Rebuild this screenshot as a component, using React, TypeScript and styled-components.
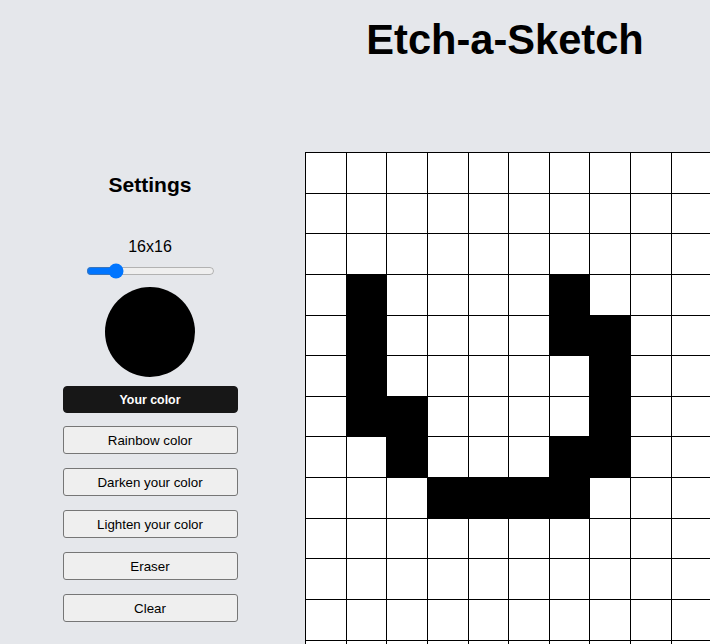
import React, { useState } from "react";
import styled, { createGlobalStyle } from "styled-components";

const Global = createGlobalStyle`
  html, body {
    margin: 0;
    padding: 0;
    background: #e5e7eb;
    overflow: hidden;
    font-family: "Liberation Sans", Arial, sans-serif;
    color: #000;
  }
`;

const Page = styled.div`
  display: flex;
  flex-direction: column;
  width: 710px;
`;

const Header = styled.header`
  display: grid;
  grid-template-columns: 300px 1fr;
  padding-top: 16px;
  height: 152px;
  box-sizing: border-box;
`;

const Title = styled.h1`
  grid-column: 2;
  margin: 0;
  text-align: center;
  font-size: 41.6px;
  line-height: 48px;
  font-weight: 700;
`;

const Main = styled.main`
  display: flex;
  align-items: flex-start;
  gap: 5px;
`;

const Sidebar = styled.aside`
  width: 300px;
  flex: none;
  display: flex;
  flex-direction: column;
  align-items: center;
`;

const SettingsTitle = styled.h2`
  margin: 21px 0 0;
  font-size: 21px;
  line-height: 24px;
  font-weight: 700;
`;

const SizeLabel = styled.div`
  margin-top: 41px;
  font-size: 16px;
  line-height: 18px;
`;

const Slider = styled.input`
  margin: 7px 0 0;
  width: 129px;
  height: 16px;
  accent-color: #0075ff;
`;

const Swatch = styled.div<{ $color: string }>`
  margin-top: 8px;
  width: 90px;
  height: 90px;
  border-radius: 50%;
  background: ${(p) => p.$color};
`;

const ButtonList = styled.div`
  margin-top: 9px;
  display: flex;
  flex-direction: column;
  gap: 14px;
`;

const ModeButton = styled.button<{ $active?: boolean }>`
  width: 175px;
  height: ${(p) => (p.$active ? "27px" : "28px")};
  margin-bottom: ${(p) => (p.$active ? "-1px" : "0")};
  box-sizing: border-box;
  font-family: "Liberation Sans", Arial, sans-serif;
  font-size: ${(p) => (p.$active ? "12.4px" : "13.33px")};
  cursor: pointer;
  padding: 0;
  border: 1px solid ${(p) => (p.$active ? "#171717" : "#767676")};
  background: ${(p) => (p.$active ? "#171717" : "#efefef")};
  color: ${(p) => (p.$active ? "#fff" : "#000")};
  font-weight: ${(p) => (p.$active ? 700 : 400)};
  border-radius: ${(p) => (p.$active ? "4px" : "3px")};
`;

const Board = styled.div<{ $size: number }>`
  flex: none;
  width: 651px;
  height: 651px;
  box-sizing: border-box;
  padding: 1px;
  background: #000;
  display: grid;
  grid-template-columns: repeat(${(p) => p.$size}, 1fr);
  grid-template-rows: repeat(${(p) => p.$size}, 1fr);
  gap: 1px;
`;

const Cell = styled.div<{ $filled: boolean }>`
  background: ${(p) => (p.$filled ? "#000" : "#fff")};
`;

const filledCells = new Set<string>([
  "3-1", "3-6",
  "4-1", "4-6", "4-7",
  "5-1", "5-7",
  "6-1", "6-2", "6-7",
  "7-2", "7-6", "7-7",
  "8-3", "8-4", "8-5", "8-6",
]);

const modes = [
  "Your color",
  "Rainbow color",
  "Darken your color",
  "Lighten your color",
  "Eraser",
  "Clear",
];

export default function App() {
  const [size, setSize] = useState(16);
  const [mode, setMode] = useState("Your color");
  const cells = [];
  for (let r = 0; r < size; r++) {
    for (let c = 0; c < size; c++) {
      cells.push(<Cell key={`${r}-${c}`} $filled={size === 16 && filledCells.has(`${r}-${c}`)} />);
    }
  }
  return (
    <Page>
      <Global />
      <Header>
        <Title>Etch-a-Sketch</Title>
      </Header>
      <Main>
        <Sidebar>
          <SettingsTitle>Settings</SettingsTitle>
          <SizeLabel>
            {size}x{size}
          </SizeLabel>
          <Slider
            type="range"
            min={4}
            max={64}
            value={size}
            onChange={(e) => setSize(Number(e.target.value))}
          />
          <Swatch $color="#000000" />
          <ButtonList>
            {modes.map((m) => (
              <ModeButton key={m} $active={m === mode} onClick={() => setMode(m)}>
                {m}
              </ModeButton>
            ))}
          </ButtonList>
        </Sidebar>
        <Board $size={size}>{cells}</Board>
      </Main>
    </Page>
  );
}
